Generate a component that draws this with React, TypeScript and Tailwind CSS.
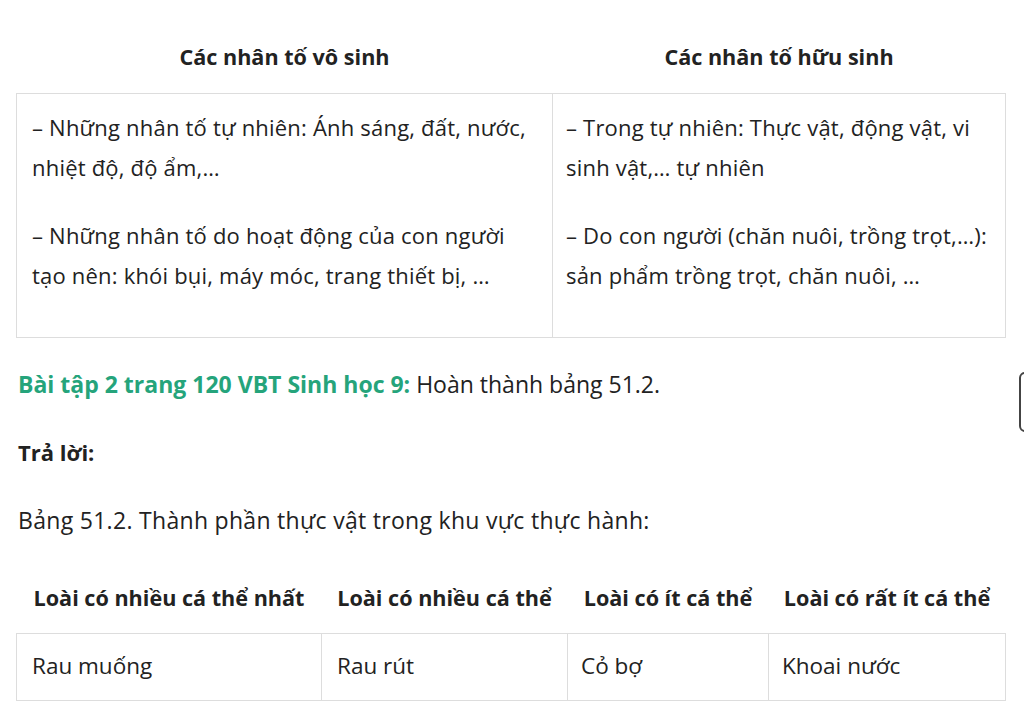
export default function App() {
  const font = { fontFamily: '"Open Sans", "Noto Sans", sans-serif' };
  return (
    <div className="relative min-h-[709px] bg-white text-[#222] overflow-hidden" style={font}>
      <div className="pl-4 pr-[18px] pt-[37px]">
        <table className="w-full border-collapse text-[22px] leading-[40px] tracking-[0.2px]">
          <thead>
            <tr>
              <th className="w-[536px] pb-4 text-[21.6px] tracking-normal font-bold text-center">Các nhân tố vô sinh</th>
              <th className="pb-4 text-[21.6px] tracking-normal font-bold text-center">Các nhân tố hữu sinh</th>
            </tr>
          </thead>
          <tbody>
            <tr>
              <td className="border border-[#ddd] align-top px-[15px] pt-[13px] pb-[14px]">
                <p className="mb-[28px]">– Những nhân tố tự nhiên: Ánh sáng, đất, nước, nhiệt độ, độ ẩm,…</p>
                <p className="mb-[28px]">– Những nhân tố do hoạt động của con người tạo nên: khói bụi, máy móc, trang thiết bị, …</p>
              </td>
              <td className="border border-[#ddd] align-top px-[13px] pt-[13px] pb-[14px]">
                <p className="mb-[28px]">– Trong tự nhiên: Thực vật, động vật, vi sinh vật,… tự nhiên</p>
                <p className="mb-[28px]">– Do con người (chăn nuôi, trồng trọt,…): sản phẩm trồng trọt, chăn nuôi, …</p>
              </td>
            </tr>
          </tbody>
        </table>

        <div className="text-[23px] leading-[40px] pt-[26px] flex flex-col gap-[28px] pl-[2px]">
          <p>
            <span className="font-bold text-[#25a47b]">Bài tập 2 trang 120 VBT Sinh học 9:</span> Hoàn thành bảng 51.2.
          </p>
          <p className="font-bold text-[22px]">Trả lời:</p>
          <p className="tracking-[0.3px]">Bảng 51.2. Thành phần thực vật trong khu vực thực hành:</p>
        </div>

        <table className="mt-[28px] w-full border-collapse text-[22.5px] leading-[40px]">
          <thead>
            <tr>
              <th className="w-[305px] pt-[10px] pb-[15px] text-[21.6px] font-bold text-center">Loài có nhiều cá thể nhất</th>
              <th className="w-[246px] pt-[10px] pb-[15px] text-[21.6px] font-bold text-center">Loài có nhiều cá thể</th>
              <th className="w-[201px] pt-[10px] pb-[15px] text-[21.6px] font-bold text-center">Loài có ít cá thể</th>
              <th className="pt-[10px] pb-[15px] text-[21.6px] font-bold text-center">Loài có rất ít cá thể</th>
            </tr>
          </thead>
          <tbody>
            <tr>
              <td className="border border-[#ddd] px-[15px] pt-[12px] pb-[14px]">Rau muống</td>
              <td className="border border-[#ddd] px-[15px] pt-[12px] pb-[14px]">Rau rút</td>
              <td className="border border-[#ddd] px-[13px] pt-[12px] pb-[14px]">Cỏ bợ</td>
              <td className="border border-[#ddd] px-[13px] pt-[12px] pb-[14px]">Khoai nước</td>
            </tr>
          </tbody>
        </table>
      </div>

      <div className="absolute left-[1019px] top-[372px] h-[60px] w-[24px] rounded-[6px] border-2 border-[#444] bg-white" />
    </div>
  );
}
